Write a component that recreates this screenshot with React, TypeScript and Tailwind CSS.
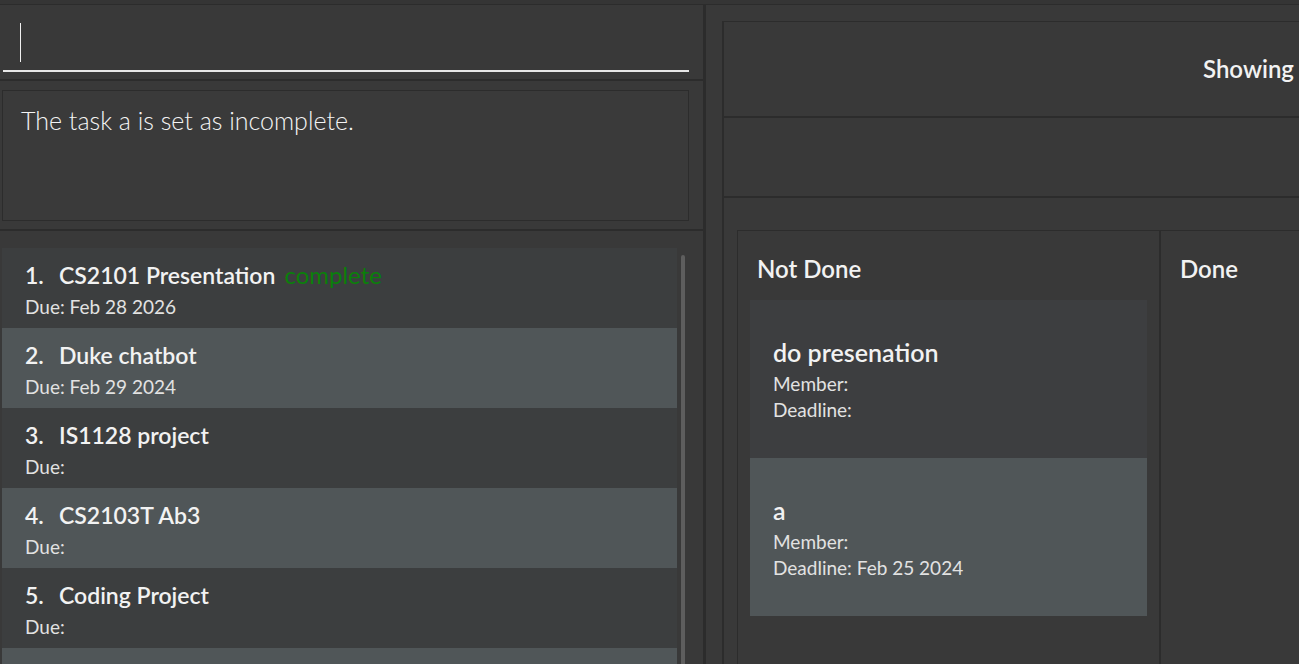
import type { ReactNode } from 'react';

// Task tracker window: command box, result pane, task list and kanban board.

interface Task {
  id: number;
  name: string;
  due: string;
  complete?: boolean;
}

const tasks: Task[] = [
  { id: 1, name: 'CS2101 Presentation', due: 'Feb 28 2026', complete: true },
  { id: 2, name: 'Duke chatbot', due: 'Feb 29 2024' },
  { id: 3, name: 'IS1128 project', due: '' },
  { id: 4, name: 'CS2103T Ab3', due: '' },
  { id: 5, name: 'Coding Project', due: '' },
];

interface Card {
  title: string;
  member: string;
  deadline: string;
}

const notDone: Card[] = [
  { title: 'do presenation', member: '', deadline: '' },
  { title: 'a', member: '', deadline: 'Feb 25 2024' },
];

const font = "font-['Lato','Open_Sans',sans-serif]";

function rowBg(index: number) {
  return index % 2 === 0 ? 'bg-[#3c3e3f]' : 'bg-[#505658]';
}

function TaskCell({ task, index }: { task: Task; index: number }) {
  return (
    <div className={`${rowBg(index)} h-[80px] w-[675px] pl-[23px] pt-[13px]`}>
      <div className="flex items-baseline text-[23px] leading-[28px] font-semibold text-[#f2f2f2]">
        <span className="w-[34px]">{task.id}.</span>
        <span>{task.name}</span>
        {task.complete && (
          <span className="ml-[9px] text-[24px] font-normal text-[#0a800a]">complete</span>
        )}
      </div>
      <div className="mt-[6px] text-[19px] leading-[24px] text-[#e2e2e2]">
        Due: {task.due}
      </div>
    </div>
  );
}

function KanbanCard({ card, index }: { card: Card; index: number }) {
  const bg = index % 2 === 0 ? 'bg-[#3d3e40]' : 'bg-[#505658]';
  return (
    <div className={`${bg} flex h-[158px] flex-col justify-center pl-[23px] pt-[1px]`}>
      <div className="text-[25px] leading-[32px] font-semibold text-[#f2f2f2]">
        {card.title}
      </div>
      <div className="mt-[3px] text-[19px] leading-[26px] text-[#e2e2e2]">
        Member: {card.member}
      </div>
      <div className="text-[19px] leading-[26px] text-[#e2e2e2]">
        Deadline: {card.deadline}
      </div>
    </div>
  );
}

function Column({ title, children, width }: { title: string; children?: ReactNode; width: string }) {
  return (
    <div className={`${width} shrink-0 px-[12px] pt-[22px]`}>
      <div className="mb-[15px] pl-[7px] text-[24px] leading-[32px] font-semibold text-[#f2f2f2]">
        {title}
      </div>
      {children}
    </div>
  );
}

export default function App() {
  return (
    <div className={`${font} h-[664px] w-full overflow-hidden bg-[#393939]`}>
      <div className="h-[5px] border-b border-[#2c2c2c] bg-[#353535]" />
      <div className="flex h-[659px]">
        {/* left panel */}
        <div className="flex w-[703px] shrink-0 flex-col">
          <div className="h-[76px] border-b-2 border-[#2c2c2c] pt-[18px]">
            <div className="ml-[20px] h-[39px] w-[1px] bg-[#f0f0f0]" />
            <div className="ml-[3px] mt-[8px] h-[2px] w-[686px] bg-[#e8e8e8]" />
          </div>
          <div className="h-[150px] border-b-2 border-[#2c2c2c] pt-[9px]">
            <div className="ml-[2px] h-[131px] w-[687px] border border-[#2c2c2c] bg-[#3a3a3a] pl-[18px] pt-[13px] text-[25px] leading-[32px] font-light text-[#f4f4f4]">
              The task a is set as incomplete.
            </div>
          </div>
          <div className="relative flex-1 overflow-hidden pl-[2px] pt-[17px]">
            {tasks.map((t, i) => (
              <TaskCell key={t.id} task={t} index={i} />
            ))}
            {/* next row, scrolled below the fold */}
            <div className={`${rowBg(tasks.length)} h-[80px] w-[675px]`} />
            <div className="absolute left-[681px] top-[24px] h-[500px] w-[4px] rounded-full bg-[#5e5e5e]" />
          </div>
        </div>

        <div className="w-[3px] shrink-0 bg-[#2c2c2c]" />

        {/* right panel */}
        <div className="flex-1 overflow-hidden pl-[16px] pt-[16px]">
          <div className="w-[1400px] border-l-2 border-t border-[#2c2c2c]">
            <div className="flex h-[96px] items-center border-b-2 border-[#2c2c2c] pl-[479px] text-[24px] font-semibold text-[#f2f2f2]">
              Showing all tasks
            </div>
            <div className="h-[80px] border-b-2 border-[#2c2c2c]" />
            <div className="pl-[13px] pt-[32px]">
              <div className="flex h-[500px] border-l border-t border-[#2c2c2c]">
                <Column title="Not Done" width="w-[421px]">
                  {notDone.map((c, i) => (
                    <KanbanCard key={c.title} card={c} index={i} />
                  ))}
                </Column>
                <div className="w-[2px] shrink-0 bg-[#2c2c2c]" />
                <Column title="Done" width="w-[500px]" />
              </div>
            </div>
          </div>
        </div>
      </div>
    </div>
  );
}
